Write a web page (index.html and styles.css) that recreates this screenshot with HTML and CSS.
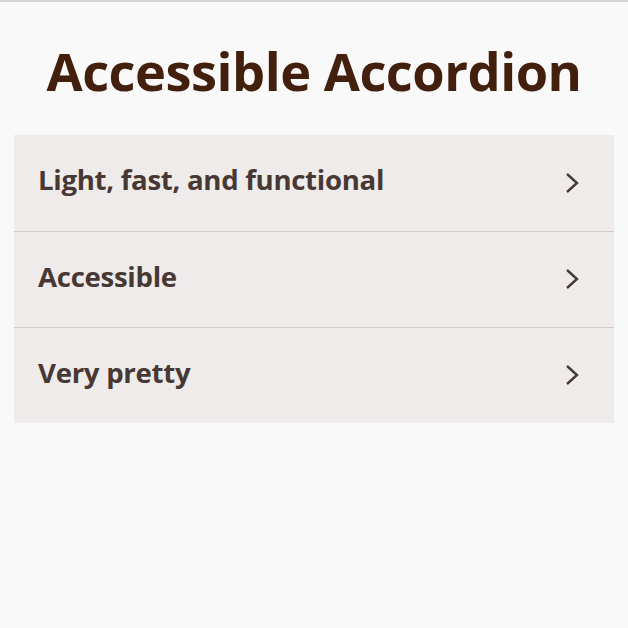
FILE: index.html
```html
<!DOCTYPE html>
<html>
<head>
<meta charset="utf-8">
<link rel="stylesheet" href="styles.css">
</head>
<body>
<main class="page">
  <h1 class="title">Accessible Accordion</h1>
  <div class="accordion">
    <button class="item"><span class="label">Light, fast, and functional</span>
      <svg class="chev" width="14" height="22" viewBox="0 0 14 22"><path d="M2 2 L12 11 L2 20" fill="none" stroke="#463a36" stroke-width="2.4"/></svg>
    </button>
    <button class="item"><span class="label">Accessible</span>
      <svg class="chev" width="14" height="22" viewBox="0 0 14 22"><path d="M2 2 L12 11 L2 20" fill="none" stroke="#463a36" stroke-width="2.4"/></svg>
    </button>
    <button class="item"><span class="label">Very pretty</span>
      <svg class="chev" width="14" height="22" viewBox="0 0 14 22"><path d="M2 2 L12 11 L2 20" fill="none" stroke="#463a36" stroke-width="2.4"/></svg>
    </button>
  </div>
</main>
</body>
</html>
```
FILE: styles.css
```css
html, body { margin: 0; padding: 0; }
body {
  background: #f9f9f9;
  border-top: 2px solid #d4d4d4;
  height: 626px;
  font-family: "Open Sans", "Noto Sans", sans-serif;
}
.page { padding: 0 14px; }
.title {
  margin: 0;
  padding-top: 34px;
  height: 133px;
  box-sizing: border-box;
  text-align: center;
  font-size: 52.4px;
  line-height: 70px;
  font-weight: 700;
  color: #42200d;
  letter-spacing: -0.5px;
}
.accordion { background: #efebea; }
.item {
  display: flex;
  align-items: center;
  justify-content: space-between;
  width: 100%;
  height: 96px;
  padding: 0 35px 0 24px;
  border: 0;
  border-top: 1px solid #d3c9c9;
  background: transparent;
  font-family: inherit;
  box-sizing: border-box;
  text-align: left;
}
.item:first-child { border-top: 0; }
.label {
  font-size: 27.6px;
  font-weight: 700;
  color: #473833;
  letter-spacing: -0.3px;
  margin-bottom: 8px;
}
.chev { display: block; margin-bottom: 1px; }
```
